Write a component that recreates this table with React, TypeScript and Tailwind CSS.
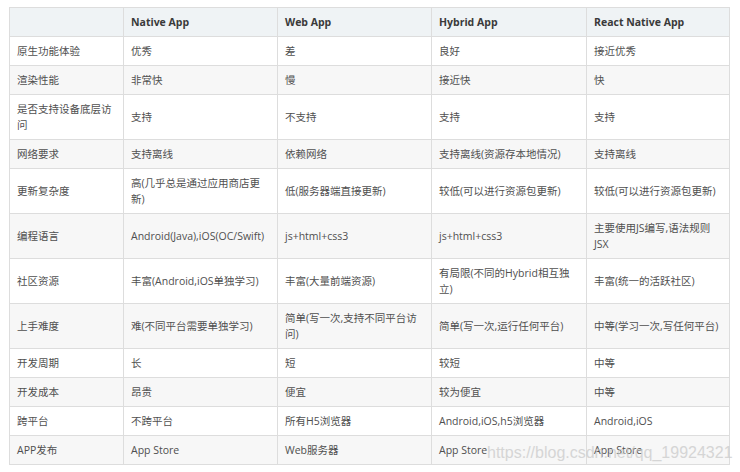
import React from 'react';

const headers = ['', 'Native App', 'Web App', 'Hybrid App', 'React Native App'];

const rows: string[][] = [
  ['原生功能体验', '优秀', '差', '良好', '接近优秀'],
  ['渲染性能', '非常快', '慢', '接近快', '快'],
  ['是否支持设备底层访问', '支持', '不支持', '支持', '支持'],
  ['网络要求', '支持离线', '依赖网络', '支持离线(资源存本地情况)', '支持离线'],
  ['更新复杂度', '高(几乎总是通过应用商店更新)', '低(服务器端直接更新)', '较低(可以进行资源包更新)', '较低(可以进行资源包更新)'],
  ['编程语言', 'Android(Java),iOS(OC/Swift)', 'js+html+css3', 'js+html+css3', '主要使用JS编写,语法规则JSX'],
  ['社区资源', '丰富(Android,iOS单独学习)', '丰富(大量前端资源)', '有局限(不同的Hybrid相互独立)', '丰富(统一的活跃社区)'],
  ['上手难度', '难(不同平台需要单独学习)', '简单(写一次,支持不同平台访问)', '简单(写一次,运行任何平台)', '中等(学习一次,写任何平台)'],
  ['开发周期', '长', '短', '较短', '中等'],
  ['开发成本', '昂贵', '便宜', '较为便宜', '中等'],
  ['跨平台', '不跨平台', '所有H5浏览器', 'Android,iOS,h5浏览器', 'Android,iOS'],
  ['APP发布', 'App Store', 'Web服务器', 'App Store', 'App Store'],
];

const widths = ['w-[114px]', 'w-[154px]', 'w-[154px]', 'w-[155px]', 'w-[143px]'];

const App: React.FC = () => {
  return (
    <div
      className="relative w-[740px] h-[472px] bg-white overflow-hidden pt-[7px] pl-[9px]"
      style={{ fontFamily: '"Open Sans", "Noto Sans CJK SC", sans-serif' }}
    >
      <table className="table-fixed border-collapse w-[720px] text-[10.5px] leading-4 text-[#4f4f4f]">
        <colgroup>
          {widths.map((w, i) => (
            <col key={i} className={w} />
          ))}
        </colgroup>
        <thead>
          <tr className="bg-[#eff3f5]">
            {headers.map((h, i) => (
              <th
                key={i}
                className="border border-[#dddddd] px-[7px] py-[6px] text-left font-bold text-[#3a3a3a] align-middle"
              >
                {h}
              </th>
            ))}
          </tr>
        </thead>
        <tbody>
          {rows.map((r, ri) => (
            <tr key={ri} className={ri % 2 === 1 ? 'bg-[#f7f7f7]' : 'bg-white'}>
              {r.map((c, ci) => (
                <td
                  key={ci}
                  className="border border-[#dddddd] px-[7px] py-[6px] align-middle"
                >
                  {c}
                </td>
              ))}
            </tr>
          ))}
        </tbody>
      </table>

      {/* CSDN watermark */}
      <div
        className="absolute left-[487px] top-[443px] text-[16px] leading-5 text-[#c8c8c8] opacity-70 whitespace-nowrap pointer-events-none"
        style={{ fontFamily: '"Liberation Sans", Arial, sans-serif' }}
      >
        https://blog.csdn.net/qq_19924321
      </div>
    </div>
  );
};

export default App;
